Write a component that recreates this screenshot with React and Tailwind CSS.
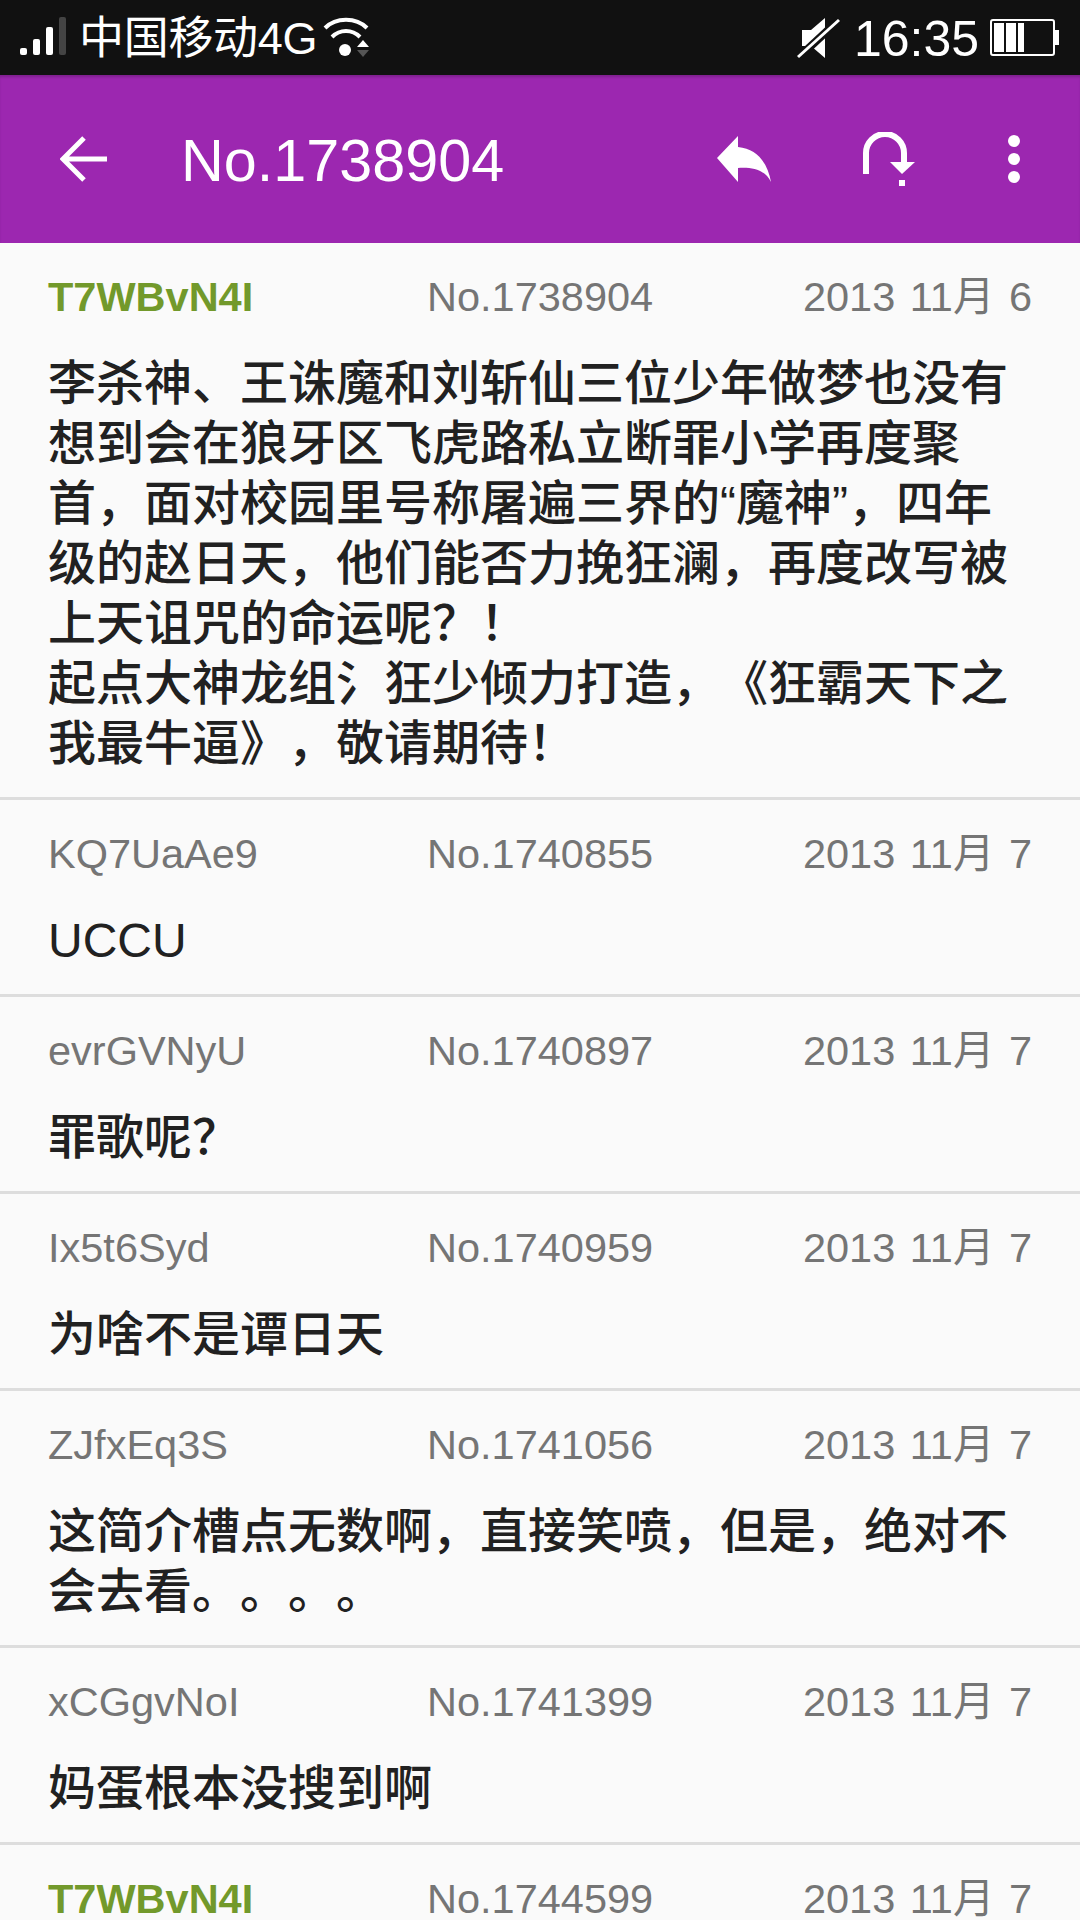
const posts = [
  {
    name: "T7WBvN4I",
    op: true,
    no: "No.1738904",
    date: "2013 11月 6",
    lines: [
      "李杀神、王诛魔和刘斩仙三位少年做梦也没有",
      "想到会在狼牙区飞虎路私立断罪小学再度聚",
      "首，面对校园里号称屠遍三界的“魔神”，四年",
      "级的赵日天，他们能否力挽狂澜，再度改写被",
      "上天诅咒的命运呢？！",
      "起点大神龙组氵狂少倾力打造，《狂霸天下之",
      "我最牛逼》，敬请期待！",
    ],
  },
  { name: "KQ7UaAe9", no: "No.1740855", date: "2013 11月 7", lines: ["UCCU"] },
  { name: "evrGVNyU", no: "No.1740897", date: "2013 11月 7", lines: ["罪歌呢？"] },
  { name: "Ix5t6Syd", no: "No.1740959", date: "2013 11月 7", lines: ["为啥不是谭日天"] },
  {
    name: "ZJfxEq3S",
    no: "No.1741056",
    date: "2013 11月 7",
    lines: ["这简介槽点无数啊，直接笑喷，但是，绝对不", "会去看。。。。"],
  },
  { name: "xCGgvNoI", no: "No.1741399", date: "2013 11月 7", lines: ["妈蛋根本没搜到啊"] },
  { name: "T7WBvN4I", op: true, no: "No.1744599", date: "2013 11月 7", lines: [] },
];

function StatusBar() {
  return (
    <div className="h-[75px] bg-[#111111] flex items-center text-white shrink-0">
      {/* signal */}
      <svg width="46" height="40" viewBox="0 0 46 40" className="ml-[20px] mt-[-1px]">
        <rect x="0" y="31" width="7" height="7" rx="2" fill="#fff" />
        <rect x="13" y="22" width="7" height="16" rx="2" fill="#fff" />
        <rect x="26" y="10" width="7" height="28" rx="2" fill="#fff" />
        <rect x="39" y="0" width="7" height="38" rx="2" fill="#444" />
      </svg>
      <span className="ml-[13px] mt-[2px] text-[45px] leading-none whitespace-nowrap tracking-[-0.3px]">中国移动4G</span>
      {/* wifi */}
      <svg width="48" height="44" viewBox="0 0 48 44" className="ml-[6px]">
        <path d="M2 12 C13 1 33 1 44 12" fill="none" stroke="#fff" strokeWidth="4" />
        <path d="M9 21 C17 13 29 13 37 21" fill="none" stroke="#fff" strokeWidth="4" />
        <circle cx="22" cy="34" r="6" fill="#fff" />
        <path d="M34 31 L40 24 L46 31 Z" fill="#fff" />
        <path d="M34 34 L46 34 L40 41 Z" fill="#555" />
      </svg>

      <div className="ml-auto flex items-center">
        {/* mute */}
        <svg width="44" height="42" viewBox="0 0 44 42">
          <path d="M5 13 H14 L28 1 V41 L14 29 H5 Z" fill="#fff" />
          <path d="M1 41 L42 3" stroke="#111" strokeWidth="8" />
          <path d="M1 40 L42 3" stroke="#fff" strokeWidth="3" />
        </svg>
        <span className="ml-[13px] mt-[2px] text-[50px] leading-none">16:35</span>
        {/* battery */}
        <svg width="70" height="38" viewBox="0 0 70 38" className="ml-[11px] mr-[20px]">
          <rect x="1" y="1" width="63" height="35" rx="2" fill="none" stroke="#fff" strokeWidth="2" />
          <rect x="65" y="11" width="4" height="15" fill="#fff" />
          <rect x="4" y="4" width="10" height="29" fill="#fff" />
          <rect x="16" y="4" width="10" height="29" fill="#fff" />
          <rect x="28" y="4" width="6" height="29" fill="#fff" />
        </svg>
      </div>
    </div>
  );
}

function Toolbar() {
  return (
    <div className="h-[168px] bg-[#9c27b0] shadow-[inset_0_3px_3px_-1px_rgba(0,0,0,0.2)] flex items-center text-white shrink-0">
      <svg width="48" height="48" viewBox="0 0 48 48" className="ml-[60px]">
        <path d="M47 24 H4 M24 3 L3 24 L24 45" fill="none" stroke="#fff" strokeWidth="5" />
      </svg>
      <span className="ml-[73px] text-[59.3px] leading-none mt-[3px]">No.1738904</span>
      <div className="ml-auto flex items-center">
        {/* reply */}
        <svg width="54" height="46" viewBox="0 0 54 46" className="ml-[1px] mr-[-1px]">
          <path d="M21 0 L0 22 L21 46 V32 C36 31 48 34 54 46 C51 28 41 13 21 11 Z" fill="#fff" />
        </svg>
        {/* jump */}
        <svg width="52" height="54" viewBox="0 0 52 54" className="ml-[93px]">
          <path d="M3 42 V21 A19 19 0 0 1 41 21 V32" fill="none" stroke="#fff" strokeWidth="6" />
          <path d="M27 30 H52 L39 42 Z" fill="#fff" />
          <rect x="36" y="48" width="6" height="6" fill="#fff" />
        </svg>
        {/* overflow */}
        <svg width="12" height="48" viewBox="0 0 12 48" className="ml-[93px] mr-[60px]">
          <circle cx="6" cy="6" r="6" fill="#fff" />
          <circle cx="6" cy="24" r="6" fill="#fff" />
          <circle cx="6" cy="42" r="6" fill="#fff" />
        </svg>
      </div>
    </div>
  );
}

function Post({ post }) {
  return (
    <div className="px-[48px] pt-[30px] pb-[23px] border-b-[3px] border-[#dddddd] bg-[#fafafa]">
      <div className="grid grid-cols-[379px_1fr_auto] text-[41.5px] leading-[48px] text-[#757575]">
        <span className={post.op ? "font-bold text-[#72992b]" : ""}>{post.name}</span>
        <span>{post.no}</span>
        <span className="[word-spacing:3px]">{post.date}</span>
      </div>
      <div className="mt-[33px] text-[48px] leading-[60px] font-medium text-[#212121] [text-spacing-trim:space-all]">
        {post.lines.map((line, i) => (
          <div key={i} className="whitespace-nowrap">
            {line}
          </div>
        ))}
      </div>
    </div>
  );
}

export default function App() {
  return (
    <div
      className="w-[1080px] h-[1920px] overflow-hidden flex flex-col bg-[#fafafa]"
      style={{ fontFamily: '"Liberation Sans", "Noto Sans CJK SC", sans-serif' }}
    >
      <StatusBar />
      <Toolbar />
      <div className="flex-1 overflow-hidden">
        {posts.map((post) => (
          <Post key={post.no} post={post} />
        ))}
      </div>
    </div>
  );
}
